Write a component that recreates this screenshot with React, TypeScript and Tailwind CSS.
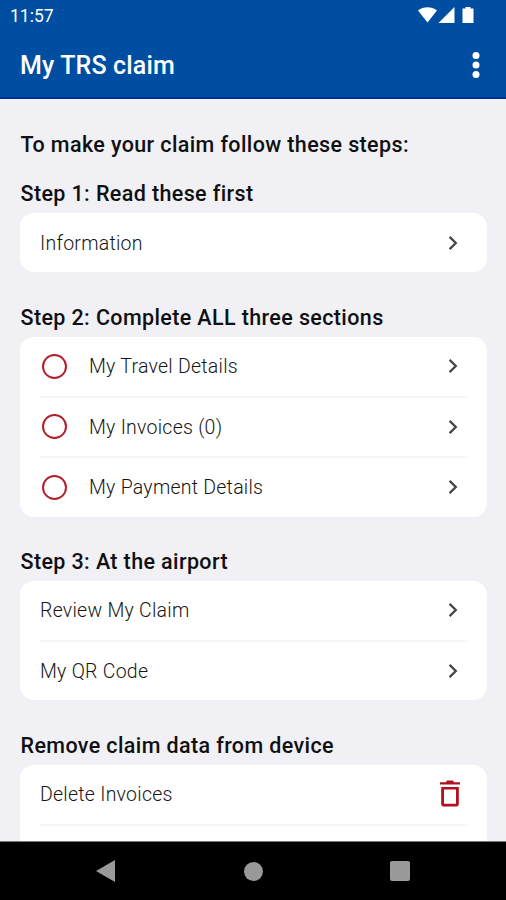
import type { ReactNode } from "react"

interface Item {
  label: string
  status?: boolean
  action?: "open" | "delete"
}

interface SectionProps {
  title: string
  items: Item[]
  className?: string
  clipped?: boolean
}

function ChevronIcon() {
  return (
    <svg width="10" height="16" viewBox="0 0 10 16" fill="none" className="mr-[9px] shrink-0">
      <path d="M1.6 1.9 7.8 8l-6.2 6.1" stroke="#47474a" strokeWidth="2.3" />
    </svg>
  )
}

function TrashIcon() {
  return (
    <svg width="20" height="27" viewBox="0 0 20 27" className="mr-[7px] shrink-0 -translate-y-px" fill="#b01020">
      <path d="M0 2.3h6L7 .6h6l1 1.7h6v2.2H0z" />
      <path
        fillRule="evenodd"
        d="M1.2 7h17.6v17.2a2.3 2.3 0 0 1-2.3 2.3h-13a2.3 2.3 0 0 1-2.3-2.3zM4 9.4v14.4h12V9.4z"
      />
    </svg>
  )
}

function Row({ label, status, action = "open" }: Item) {
  return (
    <div className="flex h-full items-center">
      {status && <span className="ml-[2px] mr-[22px] size-[25px] shrink-0 rounded-full border-[2.5px] border-[#b3202a]" />}
      <span className="flex-1 pt-[2px] text-[19.5px] font-light leading-6 tracking-[0.25px] text-[#161616]">{label}</span>
      {action === "delete" ? <TrashIcon /> : <ChevronIcon />}
    </div>
  )
}

function Heading({ children }: { children: ReactNode }) {
  return <h2 className="pl-[0.5px] text-[21.5px] font-medium leading-6 tracking-[0.38px] text-[#101012]">{children}</h2>
}

function Section({ title, items, className = "", clipped }: SectionProps) {
  return (
    <section className={className}>
      <Heading>{title}</Heading>
      <ul className="mt-[7px] rounded-[14px] bg-white px-5">
        {items.map((item, i) => (
          <li key={item.label} className={i > 0 ? "h-[60.5px] border-t-2 border-[#f5f5f7]" : "h-[59px]"}>
            <Row {...item} />
          </li>
        ))}
        {clipped && <li className="h-[60px] border-t-2 border-[#f5f5f7]" />}
      </ul>
    </section>
  )
}

export default function App() {
  return (
    <div className="flex h-[900px] w-[506px] flex-col overflow-hidden bg-[#f0f0f5] font-['Roboto',sans-serif]">
      <header className="h-[99px] shrink-0 border-b-2 border-[#00309a] bg-[#004ea1] text-white">
        <div className="flex h-8 items-center justify-between pl-[10px] pr-[32px]">
          <span className="text-[17.5px] leading-5">11:57</span>
          <svg width="56" height="17" viewBox="0 0 56 17" fill="white" className="-translate-y-px">
            <path d="M0 3.6C5.6-.8 13.4-.8 19 3.6L9.5 15.5z" />
            <path d="M36.5 0v16H20.5z" />
            <path d="M47.5 0h5v1.6h3V16H44.5V1.6h3z" />
          </svg>
        </div>
        <div className="flex h-[66px] items-center justify-between pl-5 pr-[26px]">
          <h1 className="pt-px text-[25px] font-medium leading-8 tracking-[0.15px]">My TRS claim</h1>
          <svg width="8" height="28" viewBox="0 0 8 28" fill="white">
            <circle cx="4" cy="4.6" r="3.5" />
            <circle cx="4" cy="14" r="3.5" />
            <circle cx="4" cy="23.4" r="3.5" />
          </svg>
        </div>
      </header>

      <main className="min-h-0 flex-1 overflow-hidden pl-5 pr-[19px] pt-[34px]">
        <Heading>To make your claim follow these steps:</Heading>
        <Section className="mt-[25px]" title="Step 1: Read these first" items={[{ label: "Information" }]} />
        <Section
          className="mt-[33.5px]"
          title="Step 2: Complete ALL three sections"
          items={[
            { label: "My Travel Details", status: true },
            { label: "My Invoices (0)", status: true },
            { label: "My Payment Details", status: true },
          ]}
        />
        <Section
          className="mt-[33px]"
          title="Step 3: At the airport"
          items={[{ label: "Review My Claim" }, { label: "My QR Code" }]}
        />
        <Section
          className="mt-[33.5px]"
          title="Remove claim data from device"
          items={[{ label: "Delete Invoices", action: "delete" }]}
          clipped
        />
      </main>

      <nav className="flex h-[59px] shrink-0 items-center justify-between border-t border-[#777] bg-black px-[96px]">
        <svg width="19" height="22" viewBox="0 0 19 22" fill="#999">
          <path d="M19 0v22L0 11z" />
        </svg>
        <span className="ml-px size-[19px] rounded-full bg-[#999]" />
        <span className="size-[20px] rounded-[2px] bg-[#999]" />
      </nav>
    </div>
  )
}
